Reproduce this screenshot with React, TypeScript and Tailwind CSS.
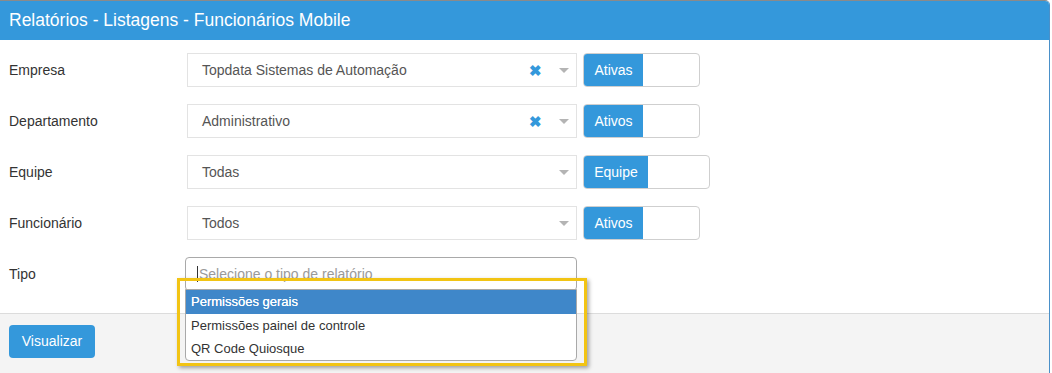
import React from 'react';

type Row = {
  label: string;
  value: string;
  clearable?: boolean;
  toggle: string;
  toggleWidth: string;
  toggleBlue: string;
};

const rows: Row[] = [
  { label: 'Empresa', value: 'Topdata Sistemas de Automação', clearable: true, toggle: 'Ativas', toggleWidth: 'w-[117px]', toggleBlue: 'w-[59px]' },
  { label: 'Departamento', value: 'Administrativo', clearable: true, toggle: 'Ativos', toggleWidth: 'w-[117px]', toggleBlue: 'w-[59px]' },
  { label: 'Equipe', value: 'Todas', toggle: 'Equipe', toggleWidth: 'w-[127px]', toggleBlue: 'w-[64px]' },
  { label: 'Funcionário', value: 'Todos', toggle: 'Ativos', toggleWidth: 'w-[117px]', toggleBlue: 'w-[59px]' },
];

const Arrow = () => (
  <span className="w-0 h-0 border-l-[5px] border-r-[5px] border-t-[5px] border-l-transparent border-r-transparent border-t-[#b4b4b4]" />
);

const App: React.FC = () => {
  return (
    <div className="w-[1052px] h-[373px] bg-white overflow-hidden font-['Liberation_Sans',Arial,sans-serif] text-[14px] text-[#333]">
      <div className="w-[1050px] h-[373px] border-t border-[#8a8a8a] border-r border-r-[#4a90c9] rounded-tr-[5px] overflow-hidden flex flex-col relative">
        <div className="h-[39px] bg-[#3498db] flex items-center px-[9px] text-white text-[17.5px] shrink-0">
          Relatórios - Listagens - Funcionários Mobile
        </div>

        <div className="flex flex-col pt-[13px] gap-[17px] h-[273px] shrink-0">
          {rows.map((r) => (
            <div key={r.label} className="flex items-center h-[34px]">
              <div className="w-[187px] pl-[9px]">{r.label}</div>
              <div className="w-[390px] h-[34px] border border-[#e3e3e3] flex items-center pl-[14px] pr-[7px] text-[#555]">
                <span className="flex-1">{r.value}</span>
                {r.clearable && <span className="text-[#3498db] font-bold text-[15px] mr-[17px] leading-none">✖</span>}
                <Arrow />
              </div>
              <div className={`${r.toggleWidth} ml-[6px] h-[34px] border border-[#cfcfcf] rounded-[4px] flex overflow-hidden`}>
                <div className={`${r.toggleBlue} bg-[#3498db] text-white flex items-center justify-center`}>{r.toggle}</div>
              </div>
            </div>
          ))}
          <div className="flex items-center h-[34px]">
            <div className="w-[185px] pl-[9px]">Tipo</div>
            <div className="w-[392px] h-[34px] border border-[#a9a9a9] rounded-[4px] flex items-center pl-[11px] text-[#9a9a9a]">
              <span className="w-px h-[16px] bg-[#333] mr-px" />
              Selecione o tipo de relatório
            </div>
          </div>
        </div>

        <div className="flex-1 bg-[#f4f4f4] border-t border-[#dcdcdc] pt-[11px] pl-[9px]">
          <button className="w-[86px] h-[33px] bg-[#3498db] text-white rounded-[4px] text-[14px]">Visualizar</button>
        </div>

        <div className="absolute left-[177px] top-[277px] w-[410px] h-[88px] border-[3px] border-[#f2c414] shadow-[2px_2px_4px_rgba(0,0,0,0.35)] pointer-events-none" />
        <div className="absolute left-[185px] top-[288px] w-[392px] h-[72px] bg-white border border-[#a9a9a9] rounded-b-[4px] flex flex-col text-[13px] text-[#333]">
          <div className="h-[24px] bg-[#3f87c9] text-white flex items-center pl-[5px] [text-shadow:0_0_0.4px_#fff]">Permissões gerais</div>
          <div className="h-[23px] flex items-center pl-[5px]">Permissões painel de controle</div>
          <div className="h-[23px] flex items-center pl-[5px]">QR Code Quiosque</div>
        </div>
      </div>
    </div>
  );
};

export default App;
